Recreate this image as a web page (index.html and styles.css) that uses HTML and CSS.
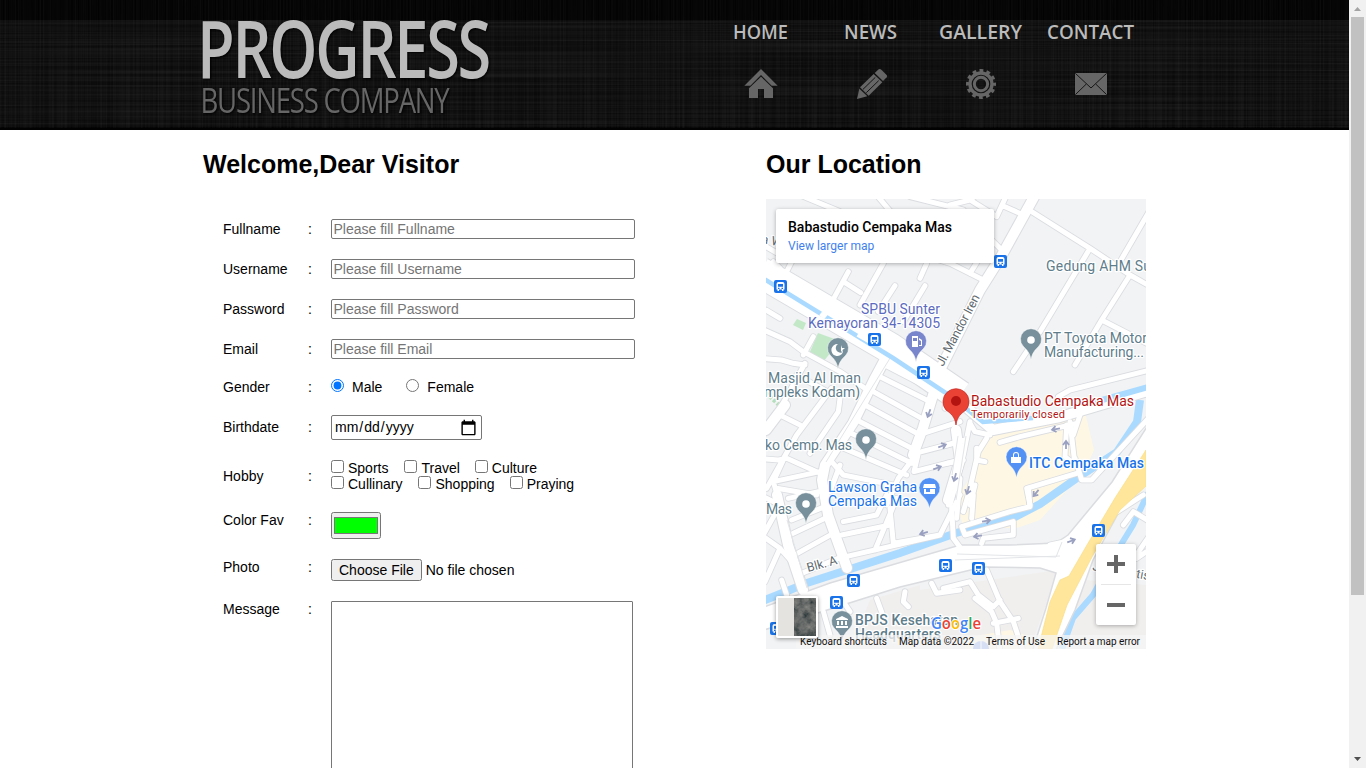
FILE: index.html
```html
<!DOCTYPE html>
<html lang="en">
<head>
<meta charset="utf-8">
<title>Progress Business Company</title>
<link rel="stylesheet" href="styles.css">
</head>
<body>
<div class="page">
<header class="header">
  <svg class="texture" width="1349" height="130" aria-hidden="true">
    <filter id="vert" x="0" y="0" width="100%" height="100%" color-interpolation-filters="sRGB"><feTurbulence type="fractalNoise" baseFrequency=".6 .003" numOctaves="1" seed="4"/><feColorMatrix values="0 0 0 0 1  0 0 0 0 1  0 0 0 0 1  .1 0 0 0 -.035"/></filter>
    <filter id="horiz" x="0" y="0" width="100%" height="100%" color-interpolation-filters="sRGB"><feTurbulence type="fractalNoise" baseFrequency=".003 .6" numOctaves="1" seed="9"/><feColorMatrix values="0 0 0 0 1  0 0 0 0 1  0 0 0 0 1  .12 0 0 0 -.042"/></filter>
    <rect width="1349" height="130" fill="#020202"/>
    <rect y="20" width="1349" height="107" fill="#0a0a0a"/>
    <rect width="1349" height="128" filter="url(#vert)"/>
    <rect y="20" width="1349" height="108" filter="url(#horiz)"/>
  </svg>
  <div class="bar">
    <svg class="logo" width="310" height="130" viewBox="200 0 310 130">
      <text class="logo-main" x="197" y="78" textLength="292" lengthAdjust="spacingAndGlyphs">PROGRESS</text>
      <text class="logo-sub" x="200.500" y="113" textLength="248" lengthAdjust="spacingAndGlyphs">BUSINESS COMPANY</text>
    </svg>
    <nav class="nav">
      <a><svg width="110" height="130" viewBox="706 0 110 130"><text x="733" y="39" textLength="55" lengthAdjust="spacingAndGlyphs">HOME</text>
        <g transform="translate(720 0) scale(.33333)"><path d="M123 207 73 257H91L123 225 155 257H173Z"/><path d="M123 230 87 265V294H114V267H132V294H159V265Z"/></g></svg></a>
      <a><svg width="110" height="130" viewBox="816 0 110 130"><text x="844" y="39" textLength="53" lengthAdjust="spacingAndGlyphs">NEWS</text>
        <g transform="translate(720 0) scale(.33333)"><path d="M464 219 476 208Q480 205 484 209L500 225Q503 229 500 232L489 243Z"/><path d="M461 222 487 247 446 287 420 262Z"/><path d="M418 266 442 289 411 297Z"/><path d="M466 232 429 268M476 242 439 278" stroke="#151515" stroke-width="3"/></g></svg></a>
      <a><svg width="110" height="130" viewBox="926 0 110 130"><text x="939" y="39" textLength="83" lengthAdjust="spacingAndGlyphs">GALLERY</text>
        <g transform="translate(720 0) scale(.33333)" fill="none" stroke="#666"><circle cx="783" cy="252" r="40" stroke-width="10" stroke-dasharray="11.3 9.644" stroke-dashoffset="5.600"/><circle cx="783" cy="252" r="33" stroke-width="10"/><circle cx="783" cy="252" r="20" stroke-width="9"/></g></svg></a>
      <a><svg width="110" height="130" viewBox="1036 0 110 130"><text x="1047" y="39" textLength="87" lengthAdjust="spacingAndGlyphs">CONTACT</text>
        <g transform="translate(720 0) scale(.33333)"><rect x="1065" y="219" width="96" height="66"/><path d="M1066 220 1113 264 1160 220M1066 284 1099 252M1160 284 1127 252" fill="none" stroke="#151515" stroke-width="3"/></g></svg></a>
    </nav>
  </div>
</header>

<main class="content">
  <section class="visitor">
    <h2>Welcome,Dear Visitor</h2>
    <form class="form">
      <div class="row"><label>Fullname</label><span>:</span><input class="text" type="text" placeholder="Please fill Fullname"></div>
      <div class="row"><label>Username</label><span>:</span><input class="text" type="text" placeholder="Please fill Username"></div>
      <div class="row"><label>Password</label><span>:</span><input class="text" type="password" placeholder="Please fill Password"></div>
      <div class="row"><label>Email</label><span>:</span><input class="text" type="text" placeholder="Please fill Email"></div>
      <div class="row gender"><label>Gender</label><span>:</span><div class="radios"><input type="radio" name="g" checked><em>Male</em><input type="radio" name="g"><em>Female</em></div></div>
      <div class="row birth"><label>Birthdate</label><span>:</span><input class="date" type="date"></div>
      <div class="row hobby"><label>Hobby</label><span>:</span><div>
        <div class="checks"><label><input type="checkbox">Sports</label><label><input type="checkbox">Travel</label><label><input type="checkbox">Culture</label></div>
        <div class="checks"><label><input type="checkbox">Cullinary</label><label><input type="checkbox">Shopping</label><label><input type="checkbox">Praying</label></div></div></div>
      <div class="row color"><label>Color Fav</label><span>:</span><input type="color" value="#00ff00"></div>
      <div class="row photo"><label>Photo</label><span>:</span><input type="file"></div>
      <div class="row message"><label>Message</label><span>:</span><textarea></textarea></div>
    </form>
  </section>
  <section class="location">
    <h2>Our Location</h2>
    <div class="map">
      <svg width="380" height="450" viewBox="766 199 380 450">
        <defs>
          <g id="minor" fill="none" stroke-linecap="round" stroke-linejoin="round">
            <path transform="translate(760 195) scale(.33333)" d="M120 0 240 50M350 0 400 60M450 5 610 45M18 155 70 185M105 180 60 270M265 230 205 340M370 205 300 330M250 260 302 293M405 272 355 350M495 272 430 380M0 400 90 440 130 470 240 530 330 590M160 425 130 480M18 345 60 370M500 205 480 250M60 220 40 200"/>
            <path transform="translate(950 195) scale(.33333)" d="M245 50 420 160 540 240 620 285M420 160 270 410 190 530M600 45 510 200M540 240 455 375 375 510M455 375 600 450M-80 180 0 205 100 255M60 235 85 195M165 35 225 62M170 0 140 65 60 15M120 130 155 165M0 30 60 15 80 0"/>
            <path transform="translate(760 345) scale(.33333)" d="M375 60 520 135M360 95 500 165M340 140 485 220M315 180 480 270M290 225 465 315M265 260 455 355M240 305 440 390M215 350 250 390 400 420M460 340 415 400 380 480M490 265 600 230M485 320 600 290M475 325 462 380 600 345M555 190 560 145M240 160 235 200 150 325M135 55 55 200 10 270M60 210 120 240M215 130 110 270 20 430M-10 340 55 345 80 340 180 385M70 345 40 410 60 480M40 410 180 380M65 45 100 55 135 60M0 40 65 45M110 90 220 150M50 430 170 450M240 360 210 440M600 370 565 480"/>
            <path transform="translate(760 495) scale(.33333)" d="M85 10 175 -10M95 75 195 35M100 115 205 65M112 175 220 115M125 235 235 190 540 120 570 60 600 0M250 80 350 60 380 0M390 40 400 145 540 120M345 165 410 10M245 120 390 90M-10 110 60 160 100 205M60 160 15 260M0 0 60 30 10 120M65 255 80 300M435 290 430 320 445 335M515 265 530 295 600 285M350 310 370 365M190 350 210 420M270 350 250 320"/>
            <path transform="translate(950 345) scale(.33333)" d="M150 292 210 275 380 235M350 240 345 335 375 360 360 230M390 210 370 270M380 385 230 430 240 480M80 310 80 345 105 350M60 230 40 330 0 480M110 280 85 320 60 430 40 500M-10 300 45 285M-10 355 40 345M120 270 75 260 60 235M325 155 360 135 620 70M375 340 395 405 425 405 600 215M30 400 20 520M70 450 65 520"/>
            <path transform="translate(950 495) scale(.33333)" d="M35 95 180 50 240 35 235 -20M35 95 45 120 190 80 190 120 100 130 95 145M5 40 10 130 40 170M60 30 75 -30M-20 280 60 260 85 300 130 335 150 315M75 310 125 350 140 385 150 470M110 225 150 320 190 380 220 470M130 385 205 370M520 90 550 50 600 80M600 120 545 200M590 170 560 190M390 180 340 370 290 470M300 150 370 135M455 80 580 0"/>
          </g>
          <g id="major" fill="none" stroke-linejoin="round" stroke-linecap="round">
            <path d="M1034 197 1002 255 980 290 934 382M890 350 875 378 853 423 825 465 822 480 828 515 847 568M933 395 923 428 913 455M777 495 788 545 803 590M766 430 785 405M967 408 993 430 1060 417 1148 391M956 430 960 460 948 500"/>
          </g>
          <g id="bus"><rect x="-6.500" y="-6.500" width="13" height="13" rx="2" fill="#1a73e8"/><path fill="#fff" d="M-4-2.500Q-4-4.500-2-4.500H2Q4-4.500 4-2.500V3H3V4.500H1.500V3H-1.500V4.500H-3V3H-4Z"/><path fill="#1a73e8" d="M-2.500-2.500H2.500V.3H-2.500ZM-2.500 1.200H-1V2.400H-2.500ZM1 1.200H2.500V2.400H1Z"/></g>
          <path id="pin" d="M0 20C-1 13 -4 10-8 6A10.500 10.500 0 1 1 8 6C4 10 1 13 0 20Z" stroke="#fff" stroke-width=".5"/>
          <path id="arrow" d="M-4 0H3M0-3 4 0 0 3" fill="none" stroke="#9aa0c0" stroke-width="1.800"/>
        </defs>
        <rect x="766" y="199" width="380" height="450" fill="#f1f3f4"/>
        <path fill="#f1efee" d="M920 590 1058 570 1030 649H850L870 600 920 585ZM1085 580 1146 585V649H1050Z"/>
        <path fill="#fef7e4" d="M980 441 1000 428 1085 412 1094 450 1085 470 1040 520 1017 528 964 528 955 500 970 478ZM965 638 1010 630 1040 640V649H965Z"/>
        <path fill="#c3e8c8" d="M818 333 829 337 840 341 823 362 809 354ZM797 319 806 323 803 330 793 325Z"/>
        <path d="M766 393 781 407" stroke="#b4dfba" stroke-width="4" stroke-dasharray="3 2"/>
        <g fill="none" stroke="#aadaff"><path stroke-width="8" d="M760 602 807 583 900 553 956 533 1013 518 1040 504 1077 478 1117 452 1137 422 1140 400"/><path stroke-width="6" d="M1148 493 1133 525 1122 543 1093 595 1073 618 1062 649"/></g>
        <g stroke="#dadce0"><use href="#minor" stroke-width="20"/><use href="#major" stroke-width="12"/><path d="M760 272 890 348 960 396" fill="none" stroke-width="32"/></g>
        <path fill="#fff" stroke="#dadce0" stroke-width="1.500" d="M764 607 830 583 960 545 1010 545 1056 543 1068 535 1112 482 1150 422V455L1120 510 1093 560 1075 610 1055 652H1032L1046 608 1056 573 1040 568 983 567 900 587 764 630Z"/>
        <g stroke="#fff"><use href="#minor" stroke-width="15"/><use href="#major" stroke-width="10"/><path d="M760 272 890 348 960 396" fill="none" stroke-width="30"/></g>
        <path d="M892 355 858 410 826 462M958 436 952 475M966 436 956 500M955 560 1060 556M957 554 1056 557 1062 542M787 520 807 588" fill="none" stroke="#e3e5e8"/>
        <path d="M764 279 893 358 952 397 968 410 983 422 1033 418" fill="none" stroke="#aadaff" stroke-width="4.500"/><path d="M1095 402 1148 387" stroke="#aadaff" stroke-width="6"/>
        <path d="M821 313 826 317M858 334 872 342" stroke="#fff" stroke-width="6"/>
        <path fill="#ffe69b" stroke="#f9dc85" stroke-width=".7" d="M1038 649 1050 602 1060 580 1069 576 1087 545 1115 498 1146 450 1146 486 1120 510 1093 555 1067 605 1052 649Z"/>
        <g><use href="#arrow" transform="translate(929 413) rotate(110)"/><use href="#arrow" transform="translate(942 446) rotate(-20)"/><use href="#arrow" transform="translate(937 468) rotate(-20)"/><use href="#arrow" transform="translate(955 477) rotate(105)"/><use href="#arrow" transform="translate(968 490) rotate(105)"/><use href="#arrow" transform="translate(1056 429) rotate(170)"/><use href="#arrow" transform="translate(1066 445) rotate(-90)"/><use href="#arrow" transform="translate(1036 493) rotate(130)"/><use href="#arrow" transform="translate(986 521) rotate(-10)"/><use href="#arrow" transform="translate(978 536) rotate(170)"/><use href="#arrow" transform="translate(1071 541) rotate(-20)"/><use href="#arrow" transform="translate(924 533) rotate(165)"/></g>
        <g class="lbl">
          <text x="1046" y="271" textLength="113">Gedung AHM Sun</text>
          <text x="1044" y="343" textLength="103">PT Toyota Motor</text><text x="1044" y="357" textLength="100">Manufacturing...</text>
          <text x="768" y="383" textLength="93">Masjid Al Iman</text><text x="764" y="397" textLength="96">mpleks Kodam)</text>
          <text x="765" y="450" textLength="87">ko Cemp. Mas</text><text x="766" y="514" textLength="26">Mas</text>
          <text x="855" y="625" textLength="103" class="med">BPJS Kesehatan</text><text x="855" y="639" textLength="86" class="med">Headquarters</text>
          <g fill="#5c6bc0"><text x="861" y="314" textLength="79">SPBU Sunter</text><text x="808" y="328" textLength="132">Kemayoran 34-14305</text></g>
          <g fill="#1a73e8"><text x="828" y="492" textLength="89">Lawson Graha</text><text x="828" y="506" textLength="89">Cempaka Mas</text><text class="med" x="1029" y="468" textLength="115">ITC Cempaka Mas</text></g>
          <g fill="#b31412"><text x="971" y="406" textLength="163">Babastudio Cempaka Mas</text><text class="tiny" x="971" y="417.500" textLength="94">Temporarily closed</text></g>
          <g class="street"><text transform="translate(943 367) rotate(-62)" textLength="79">Jl. Mandor Iren</text><text transform="translate(808 572) rotate(-15)" textLength="31">Blk. A</text><text transform="translate(761 243) rotate(10)">a W</text><text transform="translate(1092 570) rotate(10)" textLength="58">Jl. Perintis</text></g>
        </g>
        <g fill="#78909c"><use href="#pin" x="1031" y="340"/><use href="#pin" x="838" y="349"/><use href="#pin" x="866" y="440"/><use href="#pin" x="806" y="504"/><use href="#pin" x="842" y="622"/></g>
        <g fill="#fff"><circle cx="1031" cy="340" r="3.800"/><circle cx="866" cy="440" r="3.800"/><circle cx="806" cy="504" r="3.800"/><path d="M838 344A6 6 0 1 0 843 352A4.500 4.500 0 1 1 838 344ZM841 345 842 348 845 348 842.500 350 843 353 841 351Z"/><path d="M842 616 848 619V620H836V619ZM837 621H839V625H837ZM841 621H843V625H841ZM845 621H847V625H845ZM836 626H848V628H836Z"/></g>
        <use href="#pin" x="916" y="342" fill="#7986cb"/><path fill="#fff" d="M912 336H918V347H912ZM919 338 922 340V346H919V345H921V341L919 340Z"/><path fill="#7986cb" d="M913 338H917V341H913Z"/>
        <g fill="#5491f5"><use href="#pin" x="929.500" y="489"/><use href="#pin" x="1016.500" y="458"/></g><path fill="#fff" d="M924 484H935L936 488H923ZM924 489H926V492H930V489H935V494H924ZM1011 457H1021V463H1011ZM1013 457V455A3 3 0 0 1 1019 455V457H1018V455A2 2 0 0 0 1014 455V457Z"/>
        <path d="M956 425C955 416 950 413 946 410A13 13 0 1 1 966 410C962 413 957 416 956 425Z" fill="#ea4335" stroke="#c5221f" stroke-width=".7"/><circle cx="956" cy="401" r="5" fill="#b31412"/>
        <use href="#bus" x="1000.500" y="261.500"/><use href="#bus" x="780.500" y="286.500"/><use href="#bus" x="874.500" y="339.500"/><use href="#bus" x="923.500" y="372.500"/><use href="#bus" x="945.500" y="565.500"/><use href="#bus" x="978.500" y="568.500"/><use href="#bus" x="1098.500" y="530.500"/><use href="#bus" x="853.500" y="580.500"/><use href="#bus" x="836.500" y="602.500"/><use href="#bus" x="776.500" y="628.500"/>
        <circle cx="981" cy="649" r="8" fill="#7b9df0"/><path d="M981 641V649" stroke="#fff"/>
        <rect x="796" y="635" width="350" height="14" fill="#f5f5f5" opacity=".75"/>
        <g class="google"><text x="931" y="629" textLength="50" lengthAdjust="spacingAndGlyphs"><tspan fill="#4285f4">G</tspan><tspan fill="#ea4335">o</tspan><tspan fill="#fbbc04">o</tspan><tspan fill="#4285f4">g</tspan><tspan fill="#34a853">l</tspan><tspan fill="#ea4335">e</tspan></text></g>
        <g class="legal"><text x="800" y="645" textLength="87">Keyboard shortcuts</text><text x="899" y="645" textLength="75">Map data ©2022</text><text x="986" y="645" textLength="59">Terms of Use</text><text x="1057" y="645" textLength="83">Report a map error</text></g>
      </svg>
      <div class="card"><b>Babastudio Cempaka Mas</b><a>View larger map</a></div>
      <div class="thumb"><svg width="38" height="38"><filter id="sat" x="0" y="0" width="100%" height="100%"><feTurbulence type="fractalNoise" baseFrequency=".12" numOctaves="4" seed="7"/><feColorMatrix values=".35 0 0 0 -.05  .33 0 0 0 -.03  .3 0 0 0 -.02  0 0 0 0 1"/></filter><rect width="16" height="38" fill="#e5e3df"/><rect x="16" width="22" height="38" filter="url(#sat)"/></svg></div>
      <div class="zoom"><i class="plus"></i><i class="minus"></i></div>
    </div>
  </section>
</main>
</div>
<aside class="scroll"><svg width="17" height="768"><rect width="17" height="768" fill="#f1f1f1"/><rect x="2" y="17" width="13" height="578" fill="#c1c1c1"/><path d="M5 11H12L8.500 7Z" fill="#a3a3a3"/><path d="M5 757H12L8.500 761Z" fill="#505050"/></svg></aside>
</body>
</html>
```

FILE: styles.css
```css
* { box-sizing: border-box; }
body { margin: 0; width: 1366px; height: 768px; overflow: hidden; display: flex; background: #fff; color: #000; font: 14px/16px "Liberation Sans", Arial, sans-serif; }
svg { display: block; }
.page { width: 1349px; height: 768px; overflow: hidden; }
.scroll { width: 17px; height: 768px; }
.header { position: relative; height: 130px; overflow: hidden; }
.texture { position: absolute; left: 0; top: 0; }
.bar { position: relative; display: flex; justify-content: space-between; padding: 0 203px 0 200px; }
.logo { overflow: visible; }
.logo text { font-family: "Open Sans", sans-serif; filter: drop-shadow(1px 1px 1px #000); }
.logo .logo-main { font-size: 79px; font-weight: 600; letter-spacing: -3px; fill: #bbb; }
.logo .logo-sub { font-size: 35px; font-weight: 500; letter-spacing: -1.6px; fill: #666; }
.nav { display: flex; }
.nav svg { fill: #666; }
.nav text { fill: #bbb; font: 650 19px "Open Sans", sans-serif; }
.content { display: flex; padding-left: 203px; }
.visitor { width: 563px; }
h2 { margin: 0; padding-top: 19px; height: 69px; font-size: 25px; line-height: 30px; font-weight: bold; }
.form { padding: 10px 0 0 20px; }
.row { display: flex; align-items: center; height: 40px; }
.row > label { width: 85px; }
.row > span { width: 23px; }
input, textarea { margin: 0; font: 14px "Liberation Sans", Arial, sans-serif; }
.text { width: 304px; height: 20px; padding: 1px 1.5px; border: 1px solid #767676; border-radius: 2px; }
.text::placeholder { color: #757575; }
.row.gender { height: 36px; }
.radios { display: flex; align-items: center; }
.radios input { width: 13px; height: 13px; margin-top: -3px; }
.radios em { font-style: normal; margin: 0 24px 0 8px; }
.row.birth { height: 44px; }
.date { width: 151px; height: 25px; padding: 0 2px; border: 1px solid #767676; border-radius: 2px; }
.date::-webkit-calendar-picker-indicator { width: 17px; height: 17px; padding: 0; margin-right: 2px; background-size: 17px 17px; }
.row.hobby { height: 54px; }
.checks { display: flex; gap: 15px; height: 16px; }
.checks label { display: flex; gap: 4px; white-space: nowrap; }
.checks label:first-child { margin-right: 1px; }
.checks input { width: 13px; height: 13px; }
.row.color { height: 34px; }
.row.color input { width: 50px; height: 27px; margin-top: 11px; padding: 0; }
.row.color input::-webkit-color-swatch-wrapper { padding: 4px 2px; }
.row.photo { height: 60px; }
.row.photo input { margin-top: 6px; height: 22px; width: 250px; }
.row.message { height: 200px; align-items: flex-start; padding-top: 4px; }
.message textarea { width: 302px; height: 210px; border: 1px solid #767676; border-radius: 1px; resize: none; }
.map { position: relative; width: 380px; height: 450px; overflow: hidden; font-family: Roboto, sans-serif; }
.lbl text { font: 400 14px Roboto, sans-serif; paint-order: stroke; stroke: #fff; stroke-width: 2.5px; stroke-linejoin: round; }
.lbl { fill: #607d8b; }
.lbl .med { font-weight: 500; }
.lbl .tiny { font-size: 11px; }
.lbl .street text { font-size: 12.5px; fill: #5f6a6f; }
.google text { font: 600 17px "Open Sans", sans-serif; paint-order: stroke; stroke: #fff; stroke-width: 2px; }
.legal text { font: 10px Roboto, sans-serif; fill: #111; }
.card { position: absolute; left: 10px; top: 10px; width: 218px; height: 54px; padding: 9px 12px; background: #fff; border-radius: 2px; box-shadow: 0 1px 4px rgba(0,0,0,.3); }
.card b { display: block; font-size: 14px; font-weight: 500; line-height: 18px; white-space: nowrap; }
.card a { display: block; font-size: 12px; line-height: 20px; color: #427fed; }
.thumb { position: absolute; left: 10px; top: 397px; border: 2px solid #fff; border-radius: 2px; box-shadow: 0 1px 4px rgba(0,0,0,.4); }
.zoom { position: absolute; left: 330px; top: 345px; width: 40px; height: 81px; background: #fff; border-radius: 2px; box-shadow: 0 1px 4px rgba(0,0,0,.3); display: flex; flex-direction: column; align-items: center; }
.zoom i { width: 30px; height: 41px; background: linear-gradient(#666, #666) center/18px 4px no-repeat; }
.zoom .plus { background: linear-gradient(#666, #666) center/18px 4px no-repeat, linear-gradient(#666, #666) center/4px 18px no-repeat; border-bottom: 1px solid #e6e6e6; }
```
